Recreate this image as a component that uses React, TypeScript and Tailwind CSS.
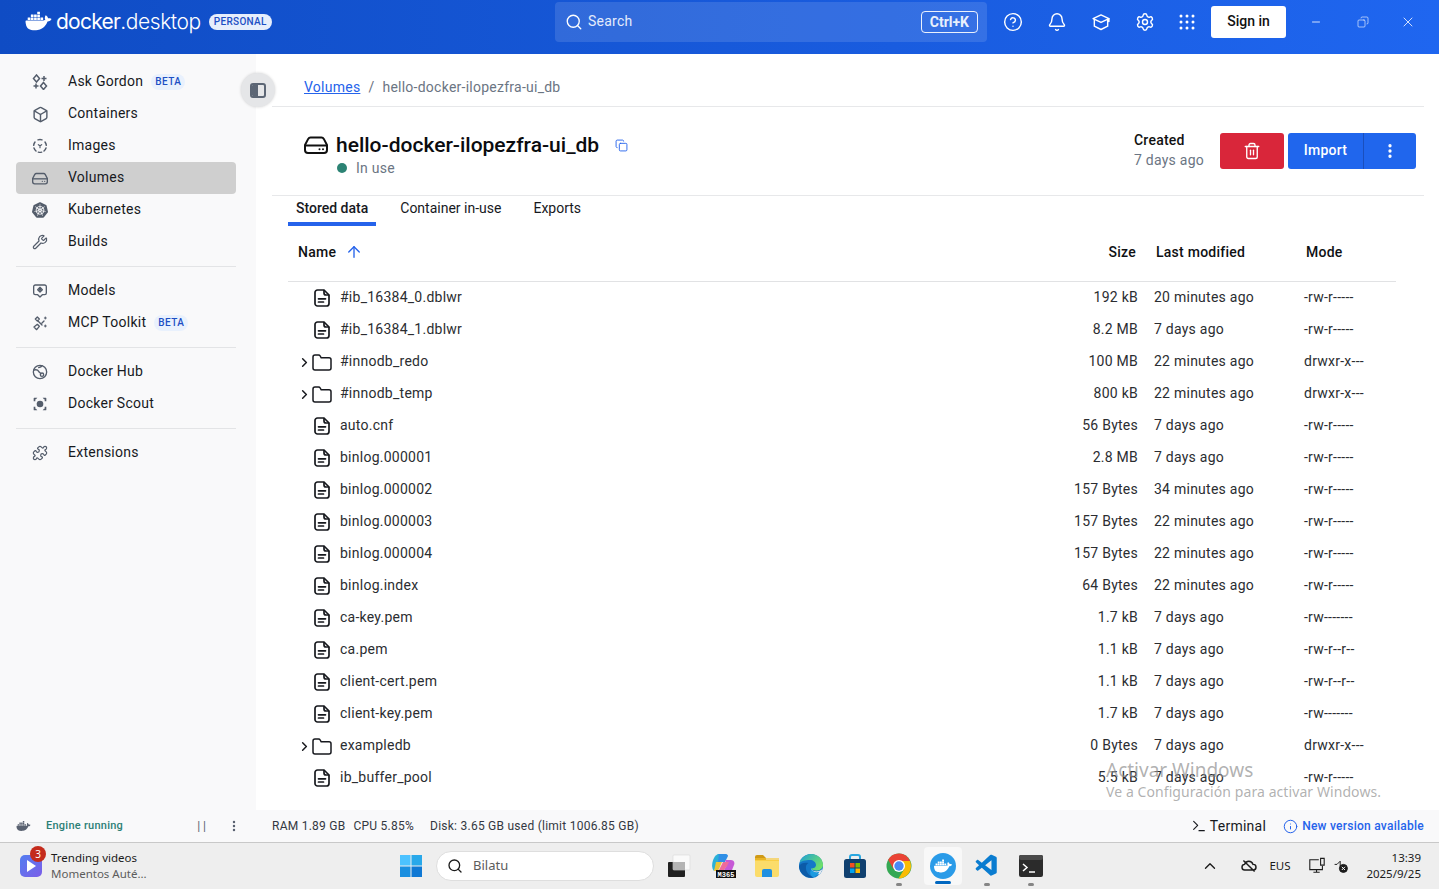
import { ReactNode } from "react";
import {
  ArrowUp,
  Box,
  Bell,
  ChevronRight,
  ChevronUp,
  CircleHelp,
  Copy,
  EllipsisVertical,
  Info,
  Minus,
  Puzzle,
  Search,
  Settings,
  Terminal,
  Trash2,
  Wrench,
  X,
} from "lucide-react";
import { SiDocker, SiKubernetes } from "react-icons/si";
import { VscVscode } from "react-icons/vsc";

const Stroke = ({ children, className, width = 2 }: { children: ReactNode; className?: string; width?: number }) => (
  <svg
    viewBox="0 0 24 24"
    fill="none"
    stroke="currentColor"
    strokeWidth={width}
    strokeLinecap="round"
    strokeLinejoin="round"
    className={className}
  >
    {children}
  </svg>
);

const GordonIcon = () => (
  <svg viewBox="0 0 16 16" className="size-4" fill="none" stroke="currentColor" strokeWidth="1.5">
    <path d="M4.5 1 7.5 4.500 4.500 8 1.500 4.500Z" />
    <path d="M12 2v5M9.500 4.500h5M4 9.500v5M1.500 12h5" />
    <path d="M11.500 8.500 14.500 12 11.500 15.500 8.500 12Z" />
  </svg>
);

const ImagesIcon = () => (
  <Stroke className="size-4" width={2.2}>
    <path d="M9 2.800a9.500 9.500 0 0 1 6 0M19.500 6a9.500 9.500 0 0 1 2 5M21 15a9.500 9.500 0 0 1-3 4.500M14.500 21.200a9.500 9.500 0 0 1-5 0M6 19.500A9.500 9.500 0 0 1 3 15M2.500 11a9.500 9.500 0 0 1 2-5" />
    <path d="m9.500 10 2.500 1.500 2.500-1.500M12 11.500V14.500" strokeWidth="1.800" />
  </Stroke>
);

const VolumeIcon = ({ className }: { className?: string }) => (
  <svg viewBox="0 0 24 18" fill="none" stroke="currentColor" strokeWidth="2" className={className}>
    <path d="M6.500 1.500h11c1 0 1.800.5 2.300 1.400L23 9v5a3 3 0 0 1-3 3H4a3 3 0 0 1-3-3V9l3.200-6.100c.5-.9 1.300-1.400 2.300-1.400Z" />
    <path d="M1 9.500h22" />
    <circle cx="15.500" cy="13.200" r="1" fill="currentColor" stroke="none" />
    <circle cx="19" cy="13.200" r="1" fill="currentColor" stroke="none" />
  </svg>
);

const ModelsIcon = () => (
  <Stroke className="size-4">
    <path d="M5 3h14a2.500 2.500 0 0 1 2.500 2.500V15a2.500 2.500 0 0 1-2.500 2.500h-3.500L12 21l-3.500-3.500H5A2.500 2.500 0 0 1 2.500 15V5.500A2.500 2.500 0 0 1 5 3Z" />
    <path d="m12 6.500 3.500 3.500-3.500 3.500L8.500 10Z" />
    <circle cx="12" cy="10" r="0.800" fill="currentColor" />
  </Stroke>
);

const McpIcon = () => (
  <Stroke className="size-4">
    <path d="m3 18 5-4 3 3-4 5ZM9 9l6 6M8 3l3 3-3 3-3-3ZM15 12l3-3" />
    <path d="M20 3v3M18.500 4.500h3M20 15v3M18.500 16.500h3" strokeWidth="1.500" />
  </Stroke>
);

const HubIcon = () => (
  <Stroke className="size-4">
    <circle cx="12" cy="12" r="10" />
    <path d="M3 9c4-1 6 0 7 2s3 2 3 4M15 2.500c-1 2-3 2.500-5 3" />
    <circle cx="15" cy="16" r="2.500" />
  </Stroke>
);

const ScoutIcon = () => (
  <svg viewBox="0 0 24 24" fill="currentColor" className="size-4">
    <circle cx="12" cy="12" r="5" />
    <path d="M2.500 8V3.500a1 1 0 0 1 1-1H8l-2 2.500H5v3ZM21.500 8V3.500a1 1 0 0 0-1-1H16l2 2.500h1v3ZM2.500 16v4.500a1 1 0 0 0 1 1H8l-2-2.500H5v-3ZM21.500 16v4.500a1 1 0 0 1-1 1H16l2-2.500h1v-3Z" />
  </svg>
);

const LearnIcon = () => (
  <Stroke className="size-5" width={1.7}>
    <path d="M12 3.500 21.500 8 12 12.500 2.500 8Z" />
    <path d="M4 9v8l8 4 8-4V9M21.500 8v3.500" />
  </Stroke>
);

const GridDots = () => (
  <svg viewBox="0 0 16 16" fill="currentColor" className="size-4">
    {[2, 8, 14].map((y) =>
      [2, 8, 14].map((x) => <circle key={`${x}-${y}`} cx={x} cy={y} r="1.500" />),
    )}
  </svg>
);

const FileIcon = () => (
  <svg viewBox="0 0 16 18" fill="none" stroke="currentColor" strokeWidth="1.700" strokeLinejoin="round" strokeLinecap="round" className="h-[18px] w-4">
    <path d="M4 1h6l5 5v8.500a2.500 2.500 0 0 1-2.500 2.500h-9A2.500 2.500 0 0 1 1 14.500v-11A2.500 2.500 0 0 1 3.500 1Z" />
    <path d="M10 1.500V4a2 2 0 0 0 2 2h2.500M4.500 9.800h7M4.500 13h5" />
  </svg>
);

const FolderIcon = () => (
  <svg viewBox="0 0 20 17" fill="none" stroke="currentColor" strokeWidth="1.500" strokeLinejoin="round" className="h-[17px] w-5">
    <path d="M1 3a2 2 0 0 1 2-2h3.500a2 2 0 0 1 1.700 1l1 1.800H17a2 2 0 0 1 2 2V14a2 2 0 0 1-2 2H3a2 2 0 0 1-2-2Z" />
  </svg>
);

const Beta = () => (
  <span className="ml-2 rounded-full bg-[#e9f1fd] px-[4px] text-[10px] leading-[16px] font-medium tracking-[0.45px] text-[#1d4fc4]">
    BETA
  </span>
);

const NavItem = ({
  icon,
  label,
  beta,
  active,
}: {
  icon: ReactNode;
  label: string;
  beta?: boolean;
  active?: boolean;
}) => (
  <div className={`flex h-8 items-center rounded-[4px] text-[14px] text-[#17191e] ${active ? "bg-[#cfcfcf]" : ""}`}>
    <span className="mr-1 flex w-[48px] justify-center text-[#545d6b]">{icon}</span>
    <span className="pb-[2px]">{label}</span>
    {beta && <Beta />}
  </div>
);

const Divider = () => <div className="my-2 h-px bg-[#e3e4e6]" />;

const rows = [
  ["file", "#ib_16384_0.dblwr", "192 kB", "20 minutes ago", "-rw-r-----"],
  ["file", "#ib_16384_1.dblwr", "8.2 MB", "7 days ago", "-rw-r-----"],
  ["dir", "#innodb_redo", "100 MB", "22 minutes ago", "drwxr-x---"],
  ["dir", "#innodb_temp", "800 kB", "22 minutes ago", "drwxr-x---"],
  ["file", "auto.cnf", "56 Bytes", "7 days ago", "-rw-r-----"],
  ["file", "binlog.000001", "2.8 MB", "7 days ago", "-rw-r-----"],
  ["file", "binlog.000002", "157 Bytes", "34 minutes ago", "-rw-r-----"],
  ["file", "binlog.000003", "157 Bytes", "22 minutes ago", "-rw-r-----"],
  ["file", "binlog.000004", "157 Bytes", "22 minutes ago", "-rw-r-----"],
  ["file", "binlog.index", "64 Bytes", "22 minutes ago", "-rw-r-----"],
  ["file", "ca-key.pem", "1.7 kB", "7 days ago", "-rw-------"],
  ["file", "ca.pem", "1.1 kB", "7 days ago", "-rw-r--r--"],
  ["file", "client-cert.pem", "1.1 kB", "7 days ago", "-rw-r--r--"],
  ["file", "client-key.pem", "1.7 kB", "7 days ago", "-rw-------"],
  ["dir", "exampledb", "0 Bytes", "7 days ago", "drwxr-x---"],
  ["file", "ib_buffer_pool", "5.5 kB", "7 days ago", "-rw-r-----"],
];

const FileRow = ({ row }: { row: string[] }) => {
  const [kind, name, size, modified, mode] = row;
  return (
    <div className="flex h-8 shrink-0 items-center text-[14px] text-[#2b2d31]">
      <div className="flex flex-1 items-center">
        <span className="flex w-[24px] justify-end">
          {kind === "dir" && <ChevronRight className="size-[15px] text-[#17191e]" strokeWidth={2.4} />}
        </span>
        <span className="flex w-[20px] justify-center text-[#17191e]">
          {kind === "dir" ? <FolderIcon /> : <FileIcon />}
        </span>
        <span className="ml-[8px] pb-[2px]">{name}</span>
      </div>
      <span className="w-[100px] pb-[2px] text-right">{size}</span>
      <span className="ml-4 w-[150px] pb-[2px]">{modified}</span>
      <span className="w-[92px] pb-[2px]">{mode}</span>
    </div>
  );
};

const TopBar = () => (
  <header className="flex h-[54px] shrink-0 bg-gradient-to-r from-[#0f4cc4] to-[#1f66f0] text-white">
    <div className="flex w-[555px] items-start pt-[8px] pl-[24px]">
      <SiDocker className="h-[26px] w-[29px]" />
      <span className="ml-[3px] font-['Inter',sans-serif] text-[21px] leading-[28px] font-normal tracking-[-0.75px]">
        docker
      </span>
      <span className="font-['Inter',sans-serif] text-[21px] leading-[28px] font-light tracking-[-0.4px]">
        .desktop
      </span>
      <span className="mt-[6px] ml-[8px] rounded-full bg-[#e6eefc] px-[5px] text-[10px] leading-[16px] font-medium tracking-[0.3px] text-[#1d4fc4]">
        PERSONAL
      </span>
    </div>
    <div className="mt-[2px] flex h-[40px] w-[432px] items-center rounded-[4px] bg-white/12 pr-[9px] pl-[10px]">
      <Search className="size-[18px]" strokeWidth={1.8} />
      <span className="ml-[5px] flex-1 pb-[2px] text-[14px] text-[#e4ecfb]">Search</span>
      <span className="rounded-[4px] border border-white/90 px-[8px] text-[14px] leading-[20px] font-bold tracking-normal text-[#e8effc]">
        Ctrl+K
      </span>
    </div>
    <div className="flex h-[44px] items-center">
      <span className="ml-[16px] flex w-[20px] justify-center">
        <CircleHelp className="size-5" strokeWidth={1.7} />
      </span>
      <span className="ml-[24px] flex w-[20px] justify-center">
        <Bell className="size-5" strokeWidth={1.7} />
      </span>
      <span className="ml-[24px] flex w-[20px] justify-center">
        <LearnIcon />
      </span>
      <span className="ml-[24px] flex w-[20px] justify-center">
        <Settings className="size-5" strokeWidth={1.7} />
      </span>
      <span className="ml-[22px] flex w-[20px] justify-center">
        <GridDots />
      </span>
      <span className="ml-[14px] flex h-[32px] w-[75px] items-center justify-center rounded-[3px] bg-white pb-[2px] text-[14px] font-medium tracking-normal text-[#111]">
        Sign in
      </span>
      <Minus className="ml-[24px] size-[12px] text-white/80" strokeWidth={2} />
      <Copy className="ml-[35px] size-[12px] -scale-x-100 text-white/60" strokeWidth={2} />
      <X className="ml-[31px] size-[16px] text-white/80" strokeWidth={1.5} />
    </div>
  </header>
);

const Sidebar = () => (
  <aside className="flex w-[256px] shrink-0 flex-col bg-[#f9f9fa] pt-[12px] pr-5 pl-4">
    <NavItem icon={<GordonIcon />} label="Ask Gordon" beta />
    <NavItem icon={<Box className="size-[17px]" strokeWidth={2} />} label="Containers" />
    <NavItem icon={<ImagesIcon />} label="Images" />
    <NavItem icon={<VolumeIcon className="h-[13px] w-[16px]" />} label="Volumes" active />
    <NavItem icon={<SiKubernetes className="size-4" />} label="Kubernetes" />
    <NavItem icon={<Wrench className="size-4" strokeWidth={1.8} />} label="Builds" />
    <Divider />
    <NavItem icon={<ModelsIcon />} label="Models" />
    <NavItem icon={<McpIcon />} label="MCP Toolkit" beta />
    <Divider />
    <NavItem icon={<HubIcon />} label="Docker Hub" />
    <NavItem icon={<ScoutIcon />} label="Docker Scout" />
    <Divider />
    <NavItem icon={<Puzzle className="size-4" strokeWidth={1.8} />} label="Extensions" />
  </aside>
);

const Main = () => (
  <main className="flex min-w-0 flex-1 flex-col overflow-hidden bg-white pr-[15px] pl-4">
    <div className="flex h-[53px] shrink-0 items-start border-b border-[#e7e8ea] pt-[23px] pl-8 text-[14px] leading-[20px]">
      <span className="text-[#2563eb] underline">Volumes</span>
      <span className="mx-[8px] text-[#6b7280]">/</span>
      <span className="text-[#6b7583]">hello-docker-ilopezfra-ui_db</span>
    </div>
    <div className="flex h-[89px] shrink-0 items-start border-b border-[#e7e8ea] pl-8">
      <div className="flex-1 pt-[24px]">
        <div className="flex items-center">
          <VolumeIcon className="h-[18px] w-[24px] text-[#111]" />
          <span className="ml-2 text-[21px] leading-[28px] font-medium tracking-normal text-[#0b0c0f]">
            hello-docker-ilopezfra-ui_db
          </span>
          <Copy className="ml-4 size-[13px] text-[#2563eb]" strokeWidth={1.7} />
        </div>
        <div className="flex items-center pl-[33px] text-[14px] leading-[18px] text-[#6b7583]">
          <span className="size-[10px] rounded-full bg-[#2c8374]" />
          <span className="ml-[9px]">In use</span>
        </div>
      </div>
      <div className="mt-[23px] text-[14px] leading-[20px]">
        <div className="font-medium text-[#111]">Created</div>
        <div className="text-[#6b7583]">7 days ago</div>
      </div>
      <div className="mt-[26px] ml-4 flex h-[36px] w-[64px] items-center justify-center rounded-[3px] bg-[#d9263a] text-white">
        <Trash2 className="size-[18px]" strokeWidth={1.8} />
      </div>
      <div className="mt-[26px] ml-1 flex h-[36px] w-[128px] items-center rounded-[3px] bg-[#2066ed] text-white">
        <span className="flex w-[75px] justify-center pb-[2px] text-[14px] font-medium">Import</span>
        <span className="flex h-full flex-1 items-center justify-center border-l border-[#1a4fbd]">
          <EllipsisVertical className="size-[18px]" strokeWidth={2.4} />
        </span>
      </div>
      <div className="w-2" />
    </div>
    <div className="mx-4 flex h-[30px] shrink-0 gap-4 text-[14px] leading-[24px] tracking-normal text-[#17191e]">
      <span className="border-b-4 border-[#2563eb] px-2 font-medium">Stored data</span>
      <span className="px-2">Container in-use</span>
      <span className="px-2">Exports</span>
    </div>
    <div className="mr-[28px] ml-4 flex h-[56px] shrink-0 items-start border-b border-[#e1e2e4] pt-[16px] text-[14px] leading-[20px] font-medium text-[#0f1114]">
      <div className="flex flex-1 items-center pl-[10px]">
        Name
        <ArrowUp className="ml-[9px] size-[18px] text-[#2563eb]" strokeWidth={1.8} />
      </div>
      <span className="w-[98px] text-right">Size</span>
      <span className="ml-5 w-[150px]">Last modified</span>
      <span className="w-[90px]">Mode</span>
    </div>
    <div className="mr-[28px] ml-4 flex flex-col">
      {rows.map((row) => (
        <FileRow key={row[1]} row={row} />
      ))}
    </div>
  </main>
);

const StatusBar = () => (
  <div className="flex h-[33px] shrink-0 items-center border-b border-[#c8c8c8] bg-[#f9f9fa]">
    <div className="flex w-[256px] items-center pl-[16px]">
      <SiDocker className="h-[14px] w-[15px] text-[#596170]" />
      <span className="ml-[15px] flex-1 text-[11px] font-medium text-[#2d7f76]">Engine running</span>
      <span className="text-[12px] tracking-[3px] text-[#596170]">||</span>
      <EllipsisVertical className="mr-[15px] ml-[18px] size-[14px] text-[#596170]" strokeWidth={2.2} />
    </div>
    <span className="ml-4 text-[12px] text-[#333842]">RAM 1.89 GB</span>
    <span className="ml-2 text-[12px] text-[#333842]">CPU 5.85%</span>
    <span className="ml-[16px] flex-1 text-[12px] text-[#333842]">Disk: 3.65 GB used (limit 1006.85 GB)</span>
    <Terminal className="size-[16px] text-[#17191e]" strokeWidth={1.7} />
    <span className="ml-[3px] text-[14px] text-[#17191e]">Terminal</span>
    <Info className="ml-[17px] size-[15px] text-[#2563eb]" strokeWidth={1.6} />
    <span className="mr-[15px] ml-[4px] text-[12px] font-medium text-[#2563eb]">New version available</span>
  </div>
);

const Win = () => (
  <svg viewBox="0 0 24 24" className="size-[24px]">
    <path fill="#4cc2ff" d="M1 1h10.500v10.500H1z" />
    <path fill="#28a8ea" d="M12.500 1H23v10.500H12.500z" />
    <path fill="#1a8fe0" d="M1 12.500h10.500V23H1z" />
    <path fill="#0f78d4" d="M12.500 12.500H23V23H12.500z" />
  </svg>
);

const TaskView = () => (
  <svg viewBox="0 0 24 24" className="size-[24px]">
    <rect x="1" y="8" width="17" height="15" rx="1" fill="#1f1f1f" />
    <rect x="6" y="1" width="17" height="15" rx="1" fill="#fafafa" stroke="#d8d8d8" strokeWidth="0.6" />
    <rect x="6" y="8" width="12" height="8" fill="#b4b4b4" />
  </svg>
);

const M365 = () => (
  <svg viewBox="0 0 26 26" className="size-[26px]">
    <path fill="#2f8fe6" d="M8 1h8c1 0 2 1 2 2l-3 6H6Z" />
    <path fill="#2ab0d8" d="M4 5c1-2 3-4 5-4l-1 8-4 9c-3-3-2-9 0-13Z" />
    <path fill="#e9c53a" d="M6 9h6l-3 7c-1 2-3 2-5 2Z" />
    <path fill="#c659d6" d="M15 7h6c3 0 4 3 3 5l-2 5H14l3-5Z" />
    <path fill="#ee6b9a" d="M13 9h6l-2 4-3 4h-5Z" />
    <rect x="6" y="17" width="20" height="8" fill="#111" />
    <text x="16" y="23.800" textAnchor="middle" fontSize="7" fontWeight="700" letterSpacing="0" fill="#fff" fontFamily="Liberation Mono, monospace">
      M365
    </text>
  </svg>
);

const Explorer = () => (
  <svg viewBox="0 0 26 26" className="size-[26px]">
    <path fill="#cf9a17" d="M1 4a2 2 0 0 1 2-2h6l3 3v3H1Z" />
    <path fill="#fbdc6a" d="M1 7h24v15a2 2 0 0 1-2 2H3a2 2 0 0 1-2-2Z" />
    <path fill="#f8c62f" d="M1 5h24v3H1z" opacity="0.6" />
    <path fill="#1f8fe0" d="M8 18a2 2 0 0 1 2-2h6a2 2 0 0 1 2 2v6H8Z" />
  </svg>
);

const Edge = () => (
  <svg viewBox="0 0 26 26" className="size-[26px]">
    <defs>
      <linearGradient id="edge-top" x1="0" y1="0" x2="1" y2="0.6">
        <stop offset="0" stopColor="#1b9fd8" />
        <stop offset="1" stopColor="#6fe06a" />
      </linearGradient>
    </defs>
    <circle cx="13" cy="13" r="12" fill="#1478c8" />
    <path fill="url(#edge-top)" d="M1.500 10C3 4.500 8 1 13 1c7 0 12 5 12 11 0 3.500-3 5.500-7 5.500-2.500 0-4.500-.8-5-2 2.500 0 5-1 5-3.500 0-3-3-5-6-5-5 0-9 1-10.500 3Z" />
    <path fill="#eeeeee" d="M13 15.500c1 2.500 5 3.500 8 2.500 1.500-.5 3-1.500 3.500-2.500-1 5-5 9-9 9.500 3-.5 5-2.500 5.500-4-4 1.500-8-1-8-5.500Z" />
    <path fill="#0c5ba8" d="M10.500 10c-2 1-3 3-2.500 6 .5 4 4 7 7.500 8.500C8 26 1 20 1 13c1.500-3 6-4 9.500-3Z" />
    <path fill="#1b9ae0" d="M13.500 16c1 3 5 4 8 2.500-1 3-4 5-6 6-3-1.500-4.500-4.500-2-8.500Z" />
  </svg>
);

const Store = () => (
  <svg viewBox="0 0 26 26" className="size-[26px]">
    <path fill="none" stroke="#2aa7e0" strokeWidth="2" d="M8 7V4a2 2 0 0 1 2-2h6a2 2 0 0 1 2 2v3" />
    <rect x="2" y="6" width="22" height="19" rx="2.500" fill="#10406f" />
    <path fill="#f25022" d="M8 10h4.500v4.500H8z" />
    <path fill="#7fba00" d="M13.500 10H18v4.500h-4.500z" />
    <path fill="#00a4ef" d="M8 15.500h4.500V20H8z" />
    <path fill="#ffb900" d="M13.500 15.500H18V20h-4.500z" />
  </svg>
);

const Chrome = () => (
  <svg viewBox="0 0 26 26" className="size-[26px]">
    <circle cx="13" cy="13" r="12.500" fill="#34a853" />
    <path fill="#ea4335" d="M13 .5A12.500 12.500 0 0 0 2.200 6.800L7.500 16 13 8h11A12.500 12.500 0 0 0 13 .5Z" />
    <path fill="#fbbc04" d="M24 8H13l5.300 8-5.800 9.500H13A12.500 12.500 0 0 0 24 8Z" />
    <circle cx="13" cy="13" r="6" fill="#fff" />
    <circle cx="13" cy="13" r="4.700" fill="#4a8af4" />
  </svg>
);

const DockerTask = () => (
  <span className="flex size-[26px] items-center justify-center rounded-full bg-[#2a9be8]">
    <SiDocker className="size-[18px] text-white" />
  </span>
);

const TermTask = () => (
  <svg viewBox="0 0 26 26" className="size-[26px]">
    <rect x="1" y="2" width="24" height="22" rx="2" fill="#2b2b2b" />
    <rect x="1" y="2" width="24" height="5" rx="2" fill="#4a4a4a" />
    <path d="m5 11 4 3.500-4 3.500" fill="none" stroke="#fff" strokeWidth="1.500" />
    <path d="M11 19h6" stroke="#fff" strokeWidth="1.500" />
  </svg>
);

const TaskIcon = ({ children, dot, active }: { children: ReactNode; dot?: boolean; active?: boolean }) => (
  <div className="relative flex h-[38px] w-[44px] items-center justify-center">
    {active && <span className="absolute inset-y-0 left-[3px] w-[38px] rounded-[4px] bg-[#f8f8f8]" />}
    <span className="relative flex">{children}</span>
    {dot && <span className="absolute bottom-[-1px] h-[3px] w-[6px] rounded-full bg-[#858585]" />}
    {active && <span className="absolute bottom-[1px] h-[3px] w-[16px] rounded-full bg-[#0067c0]" />}
  </div>
);

const Taskbar = () => (
  <div className="flex h-[46px] shrink-0 items-center bg-[#eeeeee] font-['Noto_Sans',sans-serif] tracking-normal text-[#1b1b1b]">
    <div className="relative flex w-[389px] items-center pl-[20px]">
      <span className="flex size-[22px] items-center justify-center rounded-[5px] bg-gradient-to-br from-[#4f7df0] to-[#7a5de8]">
        <span className="ml-px h-0 w-0 border-y-[6px] border-l-[9px] border-y-transparent border-l-white" />
      </span>
      <span className="absolute top-[-4px] left-[30px] flex size-[16px] items-center justify-center rounded-full bg-[#c42b1c] text-[10px] text-white">
        3
      </span>
      <div className="ml-[9px] text-[11.5px] leading-[16px]">
        <div>Trending videos</div>
        <div className="text-[#5c5c5c]">Momentos Auté...</div>
      </div>
    </div>
    <TaskIcon>
      <Win />
    </TaskIcon>
    <div className="mx-[3px] flex h-[30px] w-[218px] items-center rounded-full border border-[#dedede] bg-white pl-[10px] text-[13px] text-[#5c5c5c]">
      <Search className="size-[16px] text-[#1b1b1b]" strokeWidth={2} />
      <span className="ml-[10px]">Bilatu</span>
    </div>
    <TaskIcon>
      <TaskView />
    </TaskIcon>
    <TaskIcon>
      <M365 />
    </TaskIcon>
    <TaskIcon>
      <Explorer />
    </TaskIcon>
    <TaskIcon>
      <Edge />
    </TaskIcon>
    <TaskIcon>
      <Store />
    </TaskIcon>
    <TaskIcon dot>
      <Chrome />
    </TaskIcon>
    <TaskIcon active>
      <DockerTask />
    </TaskIcon>
    <TaskIcon dot>
      <VscVscode className="size-[26px] text-[#0a7cd0]" />
    </TaskIcon>
    <TaskIcon dot>
      <TermTask />
    </TaskIcon>
    <div className="flex flex-1 items-center justify-end pr-[18px]">
      <ChevronUp className="size-[18px]" strokeWidth={1.8} />
      <svg viewBox="0 0 20 20" className="ml-[22px] size-[16px]" fill="none" stroke="#1b1b1b" strokeWidth="1.800">
        <path d="M5 15a3.500 3.500 0 0 1-.5-7A5.500 5.500 0 0 1 15 8a3.500 3.500 0 0 1 .5 7ZM3 3l14 14" />
      </svg>
      <span className="ml-[12px] w-[21px] text-[11.5px]">EUS</span>
      <svg viewBox="0 0 20 20" className="ml-[18px] size-[18px]" fill="none" stroke="#1b1b1b" strokeWidth="1.200">
        <path d="M12 3H2v11h14v-4M6 17h7M9.500 14v3M14 1.500h4V9h-4Z" />
      </svg>
      <svg viewBox="0 0 20 20" className="ml-[7px] size-[16px]" fill="none" stroke="#1b1b1b" strokeWidth="1.200">
        <path d="M2 8h3l4-4v6" />
        <circle cx="13" cy="13" r="5" fill="#1b1b1b" />
        <path d="m11 11 4 4m0-4-4 4" stroke="#fff" />
      </svg>
      <div className="ml-[17px] text-right text-[11.5px] leading-[16px]">
        <div>13:39</div>
        <div>2025/9/25</div>
      </div>
    </div>
  </div>
);

export default function App() {
  return (
    <div className="relative flex h-[889px] w-[1439px] flex-col overflow-hidden bg-white font-['Roboto',sans-serif] tracking-[0.25px]">
      <TopBar />
      <div className="flex min-h-0 flex-1">
        <Sidebar />
        <Main />
      </div>
      <StatusBar />
      <Taskbar />
      <div className="absolute top-[73px] left-[241px] flex size-[34px] items-center justify-center rounded-full bg-[#e5e6e8] shadow-[0_0_3px_rgba(0,0,0,0.18)]">
        <span className="flex h-[15px] w-[16px] overflow-hidden rounded-[3px] border-2 border-[#5c6675]">
          <span className="w-[6px] bg-[#5c6675]" />
        </span>
      </div>
      <div className="pointer-events-none absolute top-[757px] left-[1106px] font-['Noto_Sans',sans-serif] tracking-normal text-[#8f8f8f]/70">
        <div className="text-[19px] leading-[26px]">Activar Windows</div>
        <div className="text-[14px] leading-[18px] tracking-[0.08px]">Ve a Configuración para activar Windows.</div>
      </div>
    </div>
  );
}
